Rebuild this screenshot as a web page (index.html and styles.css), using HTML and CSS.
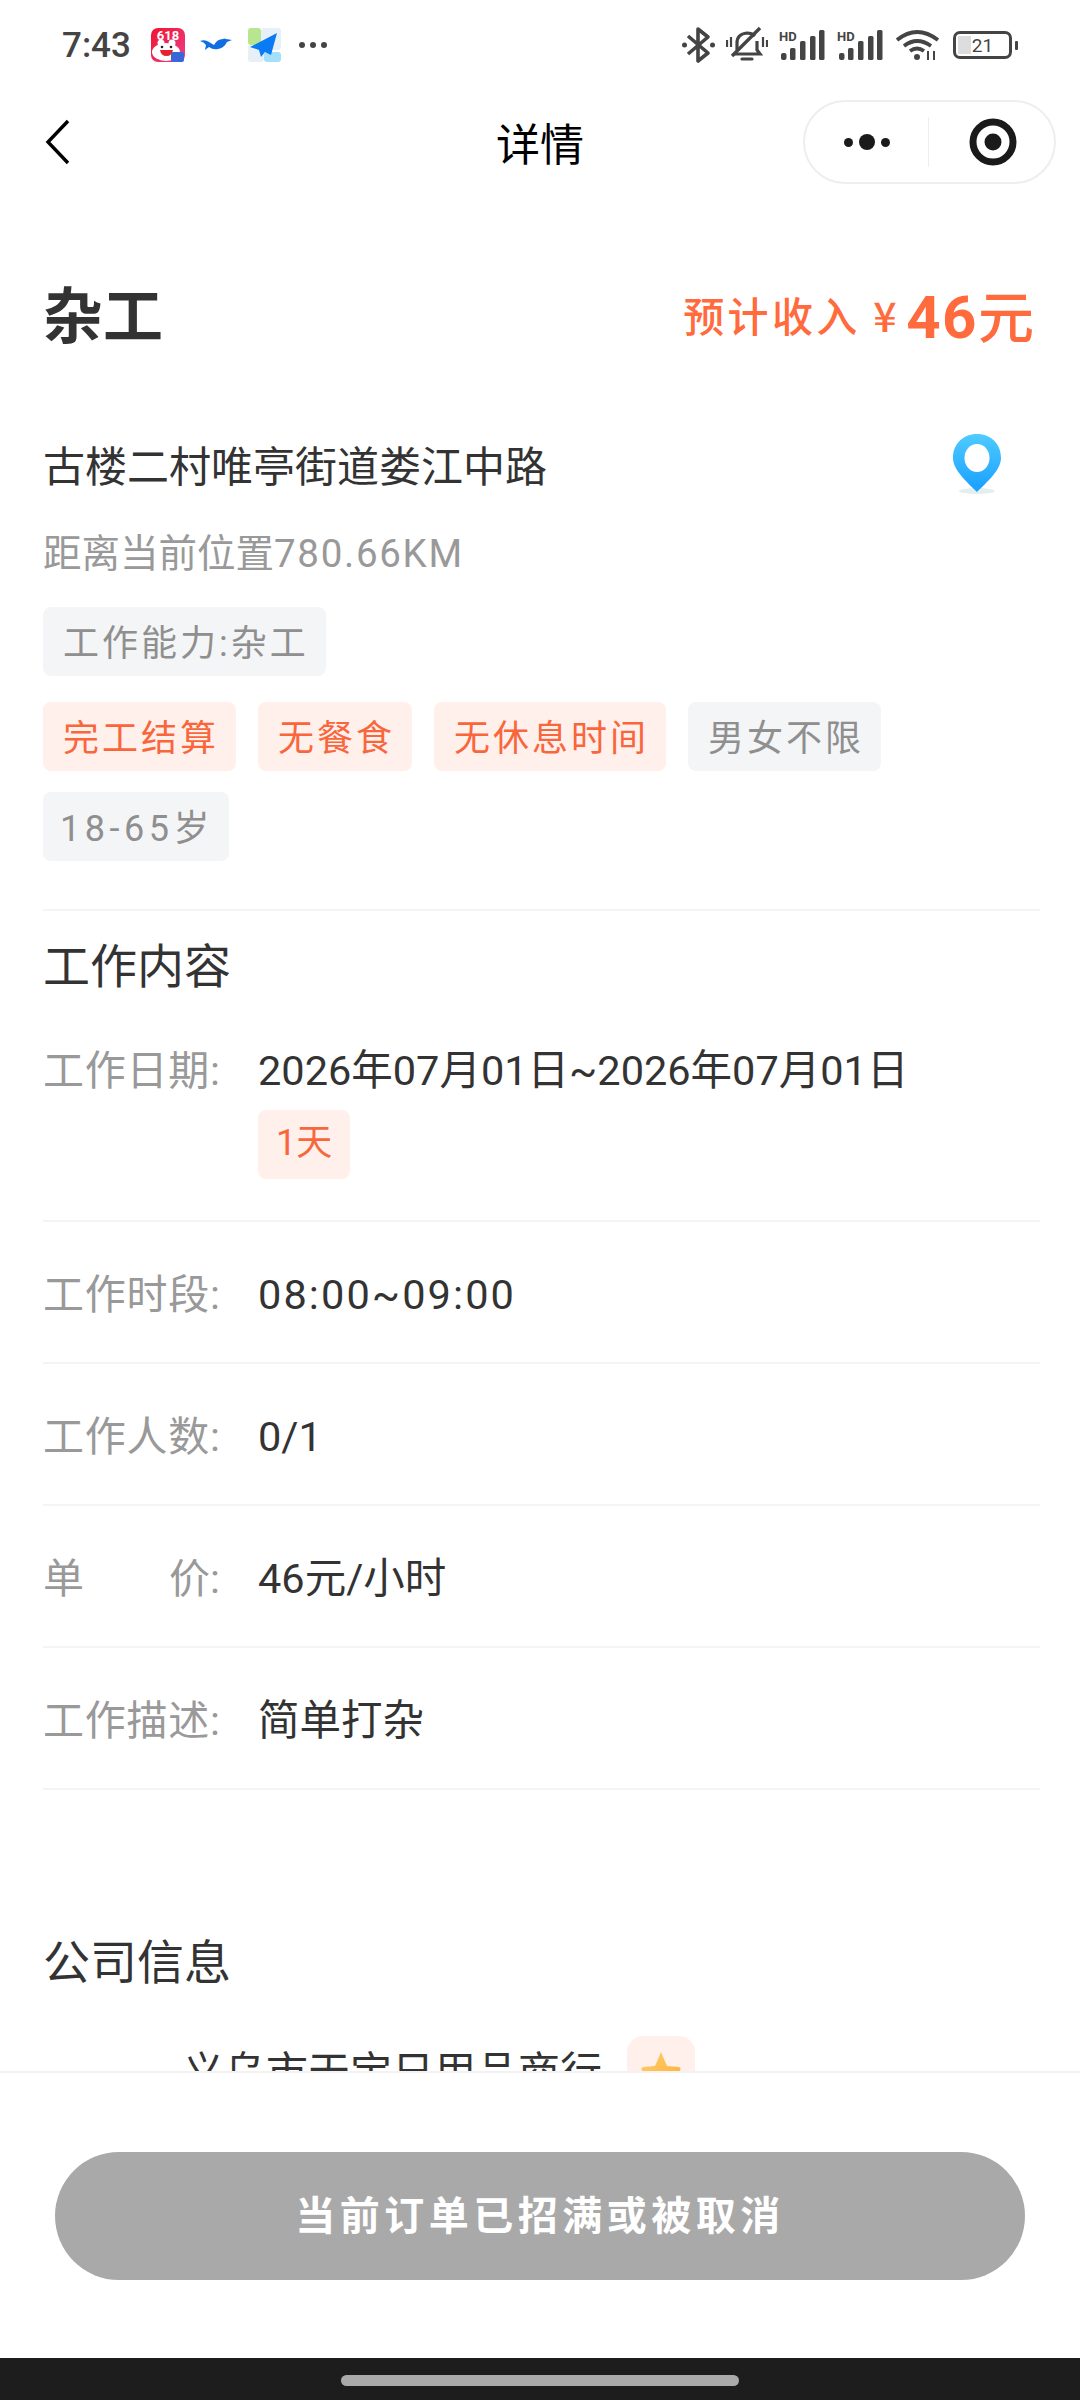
FILE: index.html
```html
<!DOCTYPE html>
<html lang="zh-CN">
<head>
<meta charset="utf-8">
<title>详情</title>
<link rel="stylesheet" href="styles.css">
</head>
<body>
<div class="app">
  <header class="status">
    <div class="status-left">
      <span class="time">7:43</span>
      <svg class="st-icon" width="34" height="34" viewBox="0 0 34 34">
        <defs><linearGradient id="jd" x1="0" y1="0" x2="1" y2="1"><stop offset="0" stop-color="#f0142c"/><stop offset="1" stop-color="#ef3f8e"/></linearGradient></defs>
        <rect width="34" height="34" rx="7" fill="url(#jd)"/>
        <text x="17" y="12" class="jd-text">618</text>
        <ellipse cx="15" cy="24" rx="14" ry="9" fill="#fff"/>
        <circle cx="10" cy="15" r="3.5" fill="#fff"/><circle cx="21" cy="15" r="3.5" fill="#fff"/>
        <path d="M9 22h13q-1 6-6.5 6T9 22z" fill="#e8222c"/>
        <circle cx="11" cy="19" r="1.3" fill="#222"/><circle cx="20" cy="19" r="1.3" fill="#222"/>
        <rect x="20" y="24" width="13" height="10" rx="2" fill="#3a67d8"/>
      </svg>
      <svg class="st-icon" width="32" height="34" viewBox="0 0 32 34">
        <path d="M0 13q5-2 9 1l5 3q3-6 9-6 1-1 3 0l6 1-5 2q-3 6-9 7-5 1-9-2l-4 3 1-5q-2-3-6-4z" fill="#0f6fe0"/>
      </svg>
      <svg class="st-icon" width="35" height="34" viewBox="0 0 35 34">
        <rect x="1" y="0" width="13" height="17" rx="3" fill="#b7e68f"/>
        <rect x="14" y="0" width="20" height="22" rx="3" fill="#e6f0f6"/>
        <rect x="1" y="17" width="16" height="17" rx="3" fill="#e6f0f6"/>
        <rect x="17" y="24" width="17" height="10" rx="3" fill="#a5e0fa"/>
        <path d="M30 5 3 19l9 3 2 7 4-5 6 3z" fill="#0a7bf5"/>
      </svg>
      <svg class="st-dots" width="30" height="8" viewBox="0 0 30 8">
        <circle cx="4" cy="4" r="3" fill="#444"/><circle cx="15" cy="4" r="3" fill="#444"/><circle cx="26" cy="4" r="3" fill="#444"/>
      </svg>
    </div>
    <div class="status-right">
      <svg width="33" height="38" viewBox="0 0 33 38">
        <path d="M6 10 26 27 16 35V3L26 11 6 28" fill="none" stroke="#444" stroke-width="3.6" stroke-linejoin="round"/>
        <circle cx="2.5" cy="19" r="2.5" fill="#444"/><circle cx="30.5" cy="19" r="2.5" fill="#444"/>
      </svg>
      <svg width="42" height="38" viewBox="0 0 42 38">
        <path d="M11 24V17q0-9 10-10 5 0 8 3M31 15v9l3 4H8" fill="none" stroke="#444" stroke-width="3.2"/>
        <path d="M16 33h10" stroke="#444" stroke-width="3.2" stroke-linecap="round"/>
        <path d="M6 30 34 2" stroke="#444" stroke-width="3.4"/>
        <path d="M1 14v7M5 11v10M37 11v10M41 14v7" stroke="#444" stroke-width="2.2"/>
      </svg>
      <svg width="47" height="30" viewBox="0 0 47 30">
        <text x="0" y="11" class="hd">HD</text>
        <rect x="2" y="23" width="5.5" height="7" rx="2" fill="#444"/><rect x="11" y="18" width="5.5" height="12" rx="1.5" fill="#444"/><rect x="21" y="11" width="5.5" height="19" rx="1.5" fill="#444"/><rect x="31" y="6" width="5.5" height="24" rx="1.5" fill="#444"/><rect x="40" y="0" width="5.5" height="30" rx="1.5" fill="#444"/>
      </svg>
      <svg width="47" height="30" viewBox="0 0 47 30">
        <text x="0" y="11" class="hd">HD</text>
        <rect x="2" y="23" width="5.5" height="7" rx="2" fill="#444"/><rect x="11" y="18" width="5.5" height="12" rx="1.5" fill="#444"/><rect x="21" y="11" width="5.5" height="19" rx="1.5" fill="#444"/><rect x="31" y="6" width="5.5" height="24" rx="1.5" fill="#444"/><rect x="40" y="0" width="5.5" height="30" rx="1.5" fill="#444"/>
      </svg>
      <svg width="45" height="32" viewBox="0 0 45 32">
        <path d="M2 11q20-16 41 0M9 17q13-10 27 0M15 22q7-5 14 0" fill="none" stroke="#444" stroke-width="3.8"/>
        <circle cx="22" cy="28" r="3" fill="#444"/>
        <path d="M33 22v9M39 22v9" stroke="#444" stroke-width="2"/>
      </svg>
      <div class="battery">
        <div class="batt-body"><span class="batt-fill"></span><span class="batt-num">21</span></div>
        <span class="batt-cap"></span>
      </div>
    </div>
  </header>

  <nav class="nav">
    <svg class="back" width="26" height="46" viewBox="0 0 26 46">
      <path d="M23 2 3 23l20 21" fill="none" stroke="#000" stroke-width="3.4"/>
    </svg>
    <span class="nav-title">详情</span>
    <div class="capsule">
      <div class="cap-more"><i class="dot"></i><i class="dot big"></i><i class="dot"></i></div>
      <div class="cap-target"><svg width="48" height="48" viewBox="0 0 48 48"><circle cx="24" cy="24" r="20" fill="none" stroke="#1a1a1a" stroke-width="7"/><circle cx="24" cy="24" r="8.5" fill="#1a1a1a"/></svg></div>
    </div>
  </nav>

  <main class="main">
    <section class="head">
      <h1 class="job">杂工</h1>
      <div class="income"><span class="income-label">预计收入 ¥</span><span class="income-num">46<span class="yuan">元</span></span></div>
    </section>
    <section class="addr">
      <span class="addr-text">古楼二村唯亭街道娄江中路</span>
      <svg class="pin" width="48" height="60" viewBox="0 0 48 60">
        <defs><linearGradient id="pin" x1="0" y1="0" x2="0" y2="1"><stop offset="0" stop-color="#4fcbff"/><stop offset="1" stop-color="#189fff"/></linearGradient></defs>
        <ellipse cx="24" cy="57" rx="18" ry="3" fill="#e3eeee"/>
        <path d="M24 0C10 0 0 10 0 24c0 12 14 24 24 34C34 48 48 36 48 24 48 10 38 0 24 0z" fill="url(#pin)"/>
        <ellipse cx="24" cy="24" rx="12.5" ry="14" fill="#fff"/>
      </svg>
    </section>
    <p class="distance">距离当前位置<span class="dist-num">780.66KM</span></p>
    <div class="skill"><span class="tag">工作能力:杂工</span></div>
    <div class="tags">
      <span class="tag hot">完工结算</span>
      <span class="tag hot">无餐食</span>
      <span class="tag hot">无休息时间</span>
      <span class="tag">男女不限</span>
      <span class="tag age">18-65岁</span>
    </div>

    <h2 class="section-title first">工作内容</h2>
    <div class="row date-row">
      <span class="label">工作日期:</span>
      <div class="value">
        <div>2026年07月01日~2026年07月01日</div>
        <span class="tag hot days">1天</span>
      </div>
    </div>
    <div class="row"><span class="label">工作时段:</span><div class="value clock">08:00~09:00</div></div>
    <div class="row"><span class="label">工作人数:</span><div class="value">0/1</div></div>
    <div class="row"><span class="label"><span class="nb">单</span> <span class="nb">价:</span></span><div class="value">46元/小时</div></div>
    <div class="row"><span class="label">工作描述:</span><div class="value">简单打杂</div></div>

    <h2 class="section-title second">公司信息</h2>
    <div class="company">
      <span class="company-name">义乌市天宝日用品商行</span>
      <span class="badge">
        <svg width="40" height="40" viewBox="0 0 40 40">
          <defs><linearGradient id="star" x1="0" y1="0" x2="1" y2="1"><stop offset="0" stop-color="#ffcf6a"/><stop offset="1" stop-color="#fdae3a"/></linearGradient></defs>
          <path d="M20 2l6 14 12 1c2 1 2 3 0 5l-8 6 3 10-13-6-13 6 3-10-8-6c-2-2-2-4 0-5l12-1z" fill="url(#star)"/>
        </svg>
      </span>
    </div>
  </main>

  <footer class="footer">
    <button class="cta" type="button">当前订单已招满或被取消</button>
  </footer>
  <div class="gesture"><span class="home-bar"></span></div>
</div>
</body>
</html>
```

FILE: styles.css
```css
* { box-sizing: border-box; }
html, body { margin: 0; padding: 0; background: #fff; }
body { font-family: Roboto, "Noto Sans CJK SC", sans-serif; color: #333; }
.app { width: 1080px; height: 2400px; display: flex; flex-direction: column; overflow: hidden; background: #fff; }

/* status bar */
.status { height: 90px; flex: none; display: flex; align-items: center; justify-content: space-between; padding: 0 62px 0 62px; }
.status-left, .status-right { display: flex; align-items: center; }
.time { font-size: 35px; font-weight: 500; color: #444; width: 89px; line-height: 1; }
.st-icon { margin-right: 15px; display: block; }
.st-dots { display: block; margin-left: 1px; }
.jd-text { font: 700 13px Roboto, sans-serif; fill: #fff; text-anchor: middle; }
.hd { font: 700 13px Roboto, sans-serif; fill: #444; }
.status-right { gap: 11px; }
.status-right > svg { display: block; }
.battery { display: flex; align-items: center; gap: 3px; margin-left: 2px; }
.batt-body { width: 59px; height: 28px; border: 3px solid #444; border-radius: 7px; position: relative; display: flex; align-items: center; justify-content: center; }
.batt-fill { position: absolute; left: 2px; top: 2px; bottom: 2px; width: 13px; background: #ddd; }
.batt-num { position: relative; font-size: 19px; color: #444; line-height: 1; }
.batt-cap { width: 3px; height: 9px; background: #444; border-radius: 1px; }

/* nav */
.nav { height: 104px; flex: none; position: relative; display: flex; align-items: center; justify-content: center; }
.back { position: absolute; left: 45px; top: 29px; }
.nav-title { font-family: "Noto Sans CJK SC", sans-serif; font-size: 44px; color: #000; }
.capsule { position: absolute; left: 803px; top: 10px; width: 253px; height: 84px; border: 2px solid #eee; border-radius: 42px; display: flex; align-items: center; }
.cap-more { width: 124px; height: 50px; display: flex; align-items: center; justify-content: center; gap: 6px; border-right: 1px solid #eee; }
.dot { width: 9px; height: 9px; border-radius: 50%; background: #1a1a1a; }
.dot.big { width: 16px; height: 16px; }
.cap-target { flex: 1; display: flex; align-items: center; justify-content: center; padding-left: 2px; }
.cap-target svg { display: block; }

/* main */
.main { flex: 1; min-height: 0; overflow: hidden; padding: 80px 40px 0 43px; }
.head { display: flex; align-items: center; justify-content: space-between; height: 84px; padding-right: 6px; }
.job { margin: 0 0 8px; font-family: "Noto Sans CJK SC", sans-serif; font-size: 60px; font-weight: 700; color: #333; line-height: 84px; }
.income { display: flex; align-items: center; color: #ff6b3d; }
.income-label { font-family: "Noto Sans CJK SC", sans-serif; font-size: 41px; font-weight: 500; letter-spacing: 3.4px; line-height: 60px; margin-bottom: 4px; }
.income-num { font-size: 60px; font-weight: 700; letter-spacing: 1.5px; margin-left: 6px; line-height: 60px; }
.yuan { font-family: "Noto Sans CJK SC", sans-serif; letter-spacing: 0; font-size: 56px; font-weight: 500; }
.addr { margin-top: 80px; height: 60px; display: flex; align-items: center; justify-content: space-between; padding-right: 39px; }
.addr-text { font-size: 42px; line-height: 60px; color: #333; }
.pin { display: block; margin-top: -8px; }
.distance { margin: 29px 0 0; font-size: 38.5px; line-height: 54px; color: #999; }
.dist-num { letter-spacing: 1.7px; }
.skill { margin-top: 26px; height: 69px; display: flex; }
.tags { margin-top: 26px; display: flex; flex-wrap: wrap; gap: 21px 22px; padding-bottom: 48px; border-bottom: 2px solid #f4f4f4; }
.tag { display: inline-flex; align-items: center; height: 69px; padding: 0 17px 4px 20px; border-radius: 8px; background: #f4f5f7; color: #8f8f8f; font-size: 36px; letter-spacing: 3px; }
.tag.hot { background: #fff0ec; color: #f9663c; }
.tag.age { letter-spacing: 4.5px; padding-left: 17px; padding-right: 15px; }
.tag.days { letter-spacing: 0; margin-top: 10px; padding: 0 18px 4px; }

.section-title { margin: 0; font-family: "Noto Sans CJK SC", sans-serif; font-size: 47px; font-weight: 400; line-height: 60px; color: #333; }
.section-title.first { margin-top: 22px; margin-bottom: 49px; }
.section-title.second { margin-top: 139px; }

.row { display: flex; padding: 0 0 38px; margin-bottom: 44px; border-bottom: 2px solid #f4f4f4; }
.row .label { width: 177px; flex: none; font-size: 41px; line-height: 58px; color: #999; text-align: justify; text-align-last: justify; margin-right: 38px; }
.nb { display: inline-block; }
.row .value { font-size: 41.5px; line-height: 58px; color: #333; }
.clock { letter-spacing: 2.1px; }
.row.date-row { padding-bottom: 41px; }

.company { margin-top: 51px; padding-left: 139px; display: flex; align-items: flex-start; gap: 25px; height: 68px; }
.company-name { font-size: 42px; line-height: 58px; color: #333; margin-top: 4px; }
.badge { width: 68px; height: 68px; flex: none; margin-top: -4px; border-radius: 16px; background: #fff0ec; display: flex; align-items: center; justify-content: center; }

/* footer */
.footer { flex: none; background: #fff; border-top: 2px solid #f2f2f2; padding: 79px 55px 78px 55px; }
.cta { display: block; width: 970px; height: 128px; border: 0; border-radius: 64px; background: #a9a9a9; color: #fff; font-family: "Noto Sans CJK SC", sans-serif; font-size: 40px; font-weight: 700; letter-spacing: 4.5px; padding: 0 0 6px; }
.gesture { height: 42px; flex: none; background: #1d1d1d; display: flex; align-items: center; justify-content: center; }
.home-bar { width: 398px; height: 11px; border-radius: 6px; background: #aaa; margin-top: 2px; }
```
